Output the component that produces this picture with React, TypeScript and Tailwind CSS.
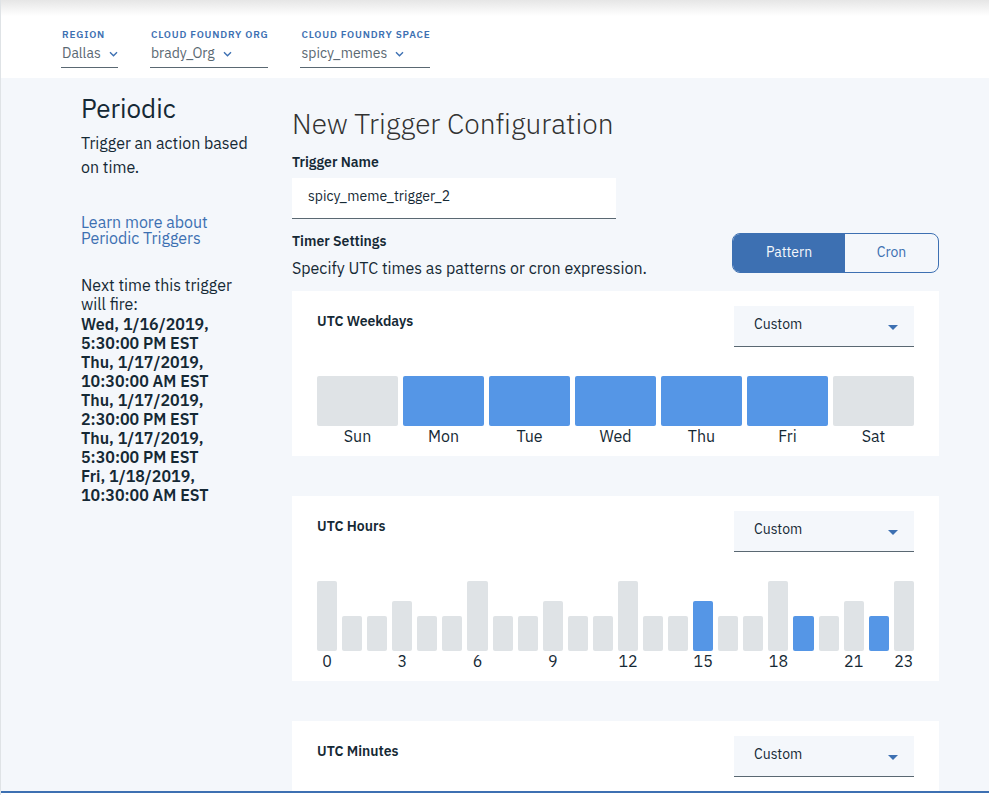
import { ReactNode } from "react";

type Scope = { id: string; label: string; value: string };

const scopes: Scope[] = [
  { id: "region", label: "REGION", value: "Dallas" },
  { id: "org", label: "CLOUD FOUNDRY ORG", value: "brady_Org" },
  { id: "space", label: "CLOUD FOUNDRY SPACE", value: "spicy_memes" },
];

const weekdays = ["Sun", "Mon", "Tue", "Wed", "Thu", "Fri", "Sat"];
const activeDays = [1, 2, 3, 4, 5];
const hours = Array.from({ length: 24 }, (_, i) => i);
const activeHours = [15, 19, 22];

const fireTimes = [
  "Wed, 1/16/2019, 5:30:00 PM EST",
  "Thu, 1/17/2019, 10:30:00 AM EST",
  "Thu, 1/17/2019, 2:30:00 PM EST",
  "Thu, 1/17/2019, 5:30:00 PM EST",
  "Fri, 1/18/2019, 10:30:00 AM EST",
];

function ScopeSelect({ id, label, value }: Scope) {
  return (
    <div className="border-b border-[#5a6872] pl-px">
      <label htmlFor={id} className="block text-[10px] leading-4 font-semibold tracking-[0.08em] text-[#3d70b2]">
        {label}
      </label>
      <div className="flex h-6 items-start gap-2">
        <select id={id} className="appearance-none bg-transparent text-sm leading-5 text-[#5a6872] outline-none">
          <option>{value}</option>
        </select>
        <svg className="pointer-events-none mt-[7px] h-2 w-[9px]" viewBox="0 0 9 8" fill="none" stroke="#3d70b2" strokeWidth="1.4" aria-hidden="true">
          <path d="M1 2.3 4.5 5.8 8 2.3" />
        </svg>
      </div>
    </div>
  );
}

function Card({ id, title, children }: { id: string; title: string; children?: ReactNode }) {
  return (
    <section className="bg-white px-[25px] pt-[15px] pb-[10px]">
      <div className="flex items-start justify-between">
        <label htmlFor={id} className="mt-[5px] text-sm leading-5 font-semibold">
          {title}
        </label>
        <div className="relative w-[180px]">
          <select
            id={id}
            className="block h-[41px] w-full appearance-none border-b border-[#5a6872] bg-[#f4f7fb] px-5 pb-1 text-sm outline-none"
          >
            <option>Custom</option>
          </select>
          <svg className="pointer-events-none absolute top-[19px] right-4 h-[5px] w-[10px]" viewBox="0 0 10 5" fill="#3d70b2" aria-hidden="true">
            <path d="M0 0h10L5 5z" />
          </svg>
        </div>
      </div>
      <div className="mt-[29px]">{children}</div>
    </section>
  );
}

function Bar({ name, active, size, label }: { name: string; active: boolean; size: string; label: string }) {
  return (
    <div className="flex min-w-0 flex-1 flex-col justify-end">
      <button
        type="button"
        aria-label={name}
        aria-pressed={active}
        className={`w-full rounded-[2px] ${size} ${active ? "bg-[#5596e6]" : "bg-[#dfe3e6]"}`}
      />
      <span className="flex h-5 justify-center text-base leading-5">{label}</span>
    </div>
  );
}

function hourSize(hour: number) {
  if (hour % 6 === 0 || hour === 23) return "h-[70px]";
  return hour % 3 === 0 ? "h-[50px]" : "h-[35px]";
}

export default function App() {
  return (
    <div className="flex h-screen flex-col overflow-hidden border-l border-[#dfe3e6] bg-white pb-0.5 font-['IBM_Plex_Sans',Roboto,'Liberation_Sans',sans-serif] text-[#152935]">
      <header className="flex h-[78px] shrink-0 items-start gap-8 bg-linear-to-b from-[#e6e6e6] to-white to-[16px] px-[60px] pt-[27px]">
        {scopes.map((scope) => (
          <ScopeSelect key={scope.id} {...scope} />
        ))}
      </header>

      <div className="flex min-h-0 flex-1 gap-10 overflow-hidden border-b-2 border-[#3d70b2] bg-[#f4f7fb] pr-[50px] pl-20">
        <aside className="w-[171px] shrink-0 pt-3">
          <h2 className="text-[26px] leading-9">Periodic</h2>
          <p className="mt-[5px] leading-6">Trigger an action based on time.</p>
          <a href="#periodic" className="mt-[35px] block leading-4 text-[#3d70b2]">
            Learn more about Periodic Triggers
          </a>
          <p className="mt-[30px] leading-[19px]">Next time this trigger will fire:</p>
          <ul className="mt-px w-[150px] leading-[19px] font-semibold">
            {fireTimes.map((time) => (
              <li key={time}>{time}</li>
            ))}
          </ul>
        </aside>

        <main className="min-w-0 flex-1 pt-7">
          <h1 className="text-[28px] leading-9 font-light text-[#323232] [font-variant-ligatures:none]">
            New Trigger Configuration
          </h1>
          <label htmlFor="trigger-name" className="mt-[10px] block text-sm leading-5 font-semibold">
            Trigger Name
          </label>
          <input
            id="trigger-name"
            type="text"
            defaultValue="spicy_meme_trigger_2"
            className="mt-1.5 block h-[41px] w-1/2 border-b border-[#5a6872] bg-white px-4 pb-1 text-sm outline-none"
          />
          <div className="mt-3 flex items-start justify-between">
            <div>
              <h3 className="text-sm leading-5 font-semibold">Timer Settings</h3>
              <p className="mt-[5px] leading-6">Specify UTC times as patterns or cron expression.</p>
            </div>
            <div className="mt-0.5 flex h-10 overflow-hidden rounded-lg border border-[#3d70b2] text-sm">
              <button type="button" aria-pressed="true" className="w-28 bg-[#3d70b2] pb-0.5 text-[#f4f7fb]">
                Pattern
              </button>
              <button type="button" aria-pressed="false" className="w-[93px] pb-0.5 text-[#3d70b2]">
                Cron
              </button>
            </div>
          </div>

          <div className="mt-[11px] flex flex-col gap-10">
            <Card id="weekdays" title="UTC Weekdays">
              <div className="flex gap-[5px]">
                {weekdays.map((day, i) => (
                  <Bar key={day} name={day} label={day} size="h-[50px]" active={activeDays.includes(i)} />
                ))}
              </div>
            </Card>
            <Card id="hours" title="UTC Hours">
              <div className="flex gap-[5px]">
                {hours.map((hour) => (
                  <Bar
                    key={hour}
                    name={`Hour ${hour}`}
                    label={hour % 3 === 0 || hour === 23 ? String(hour) : ""}
                    size={hourSize(hour)}
                    active={activeHours.includes(hour)}
                  />
                ))}
              </div>
            </Card>
            <Card id="minutes" title="UTC Minutes" />
          </div>
        </main>
      </div>
    </div>
  );
}
